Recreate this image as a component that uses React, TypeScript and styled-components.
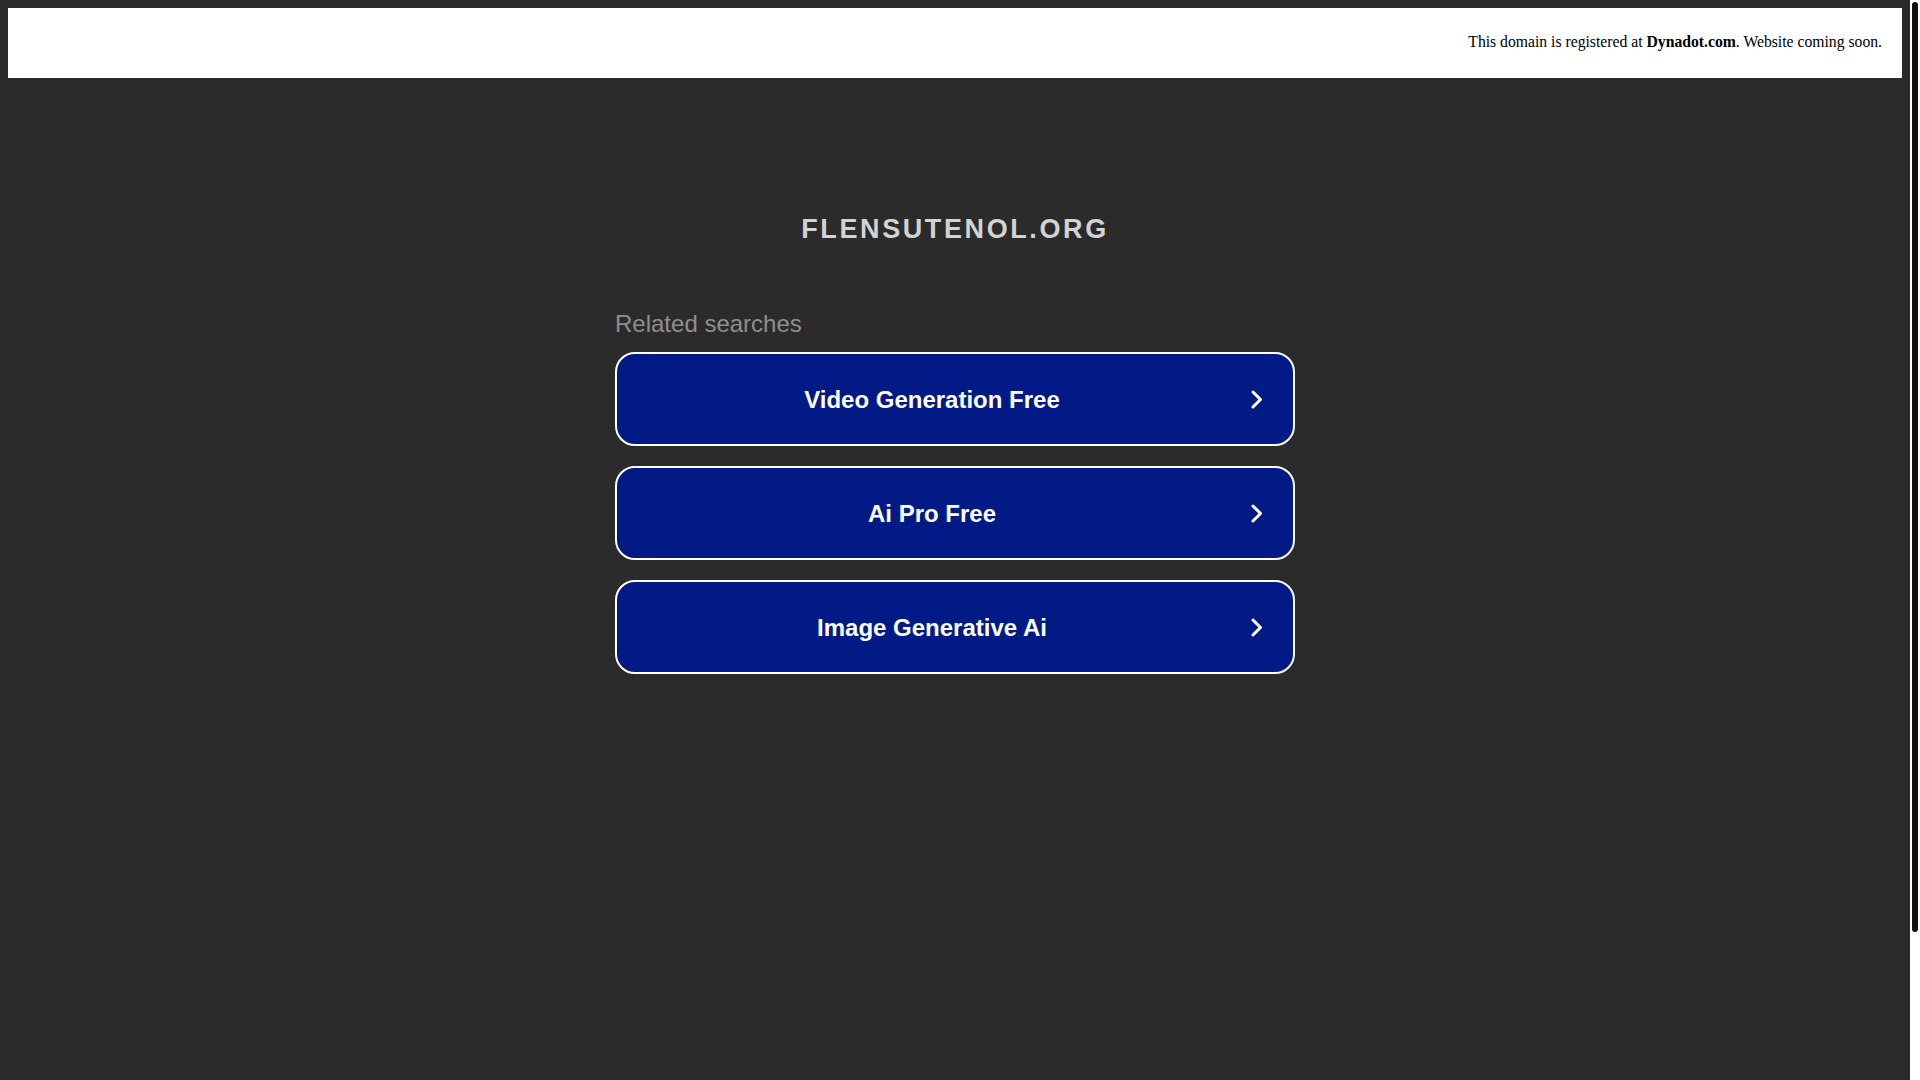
import styled, { createGlobalStyle } from "styled-components";
import { FunctionComponent } from "react";

const GlobalStyle = createGlobalStyle`
  html {
    background: #2b2b2b;
    overflow: hidden;
  }
  body {
    margin: 8px 18px 8px 8px;
    background: #2b2b2b;
    font-family: "Liberation Sans", Arial, sans-serif;
  }
`;

// the browser scrollbar seen in the shot, drawn over the right edge
const ScrollTrack = styled.div`
  position: fixed;
  top: 0;
  right: 0;
  width: 10px;
  height: 100vh;
  background: #ffffff;
`;

const ScrollThumb = styled.div`
  position: absolute;
  top: 2px;
  left: 2px;
  width: 6px;
  height: 930px;
  border-radius: 3px;
  background: #111111;
`;

const Page = styled.div`
  min-height: 1234px;
  display: flex;
  flex-direction: column;
`;

const TopBar = styled.header`
  height: 70px;
  background: #ffffff;
  display: flex;
  align-items: center;
  justify-content: flex-end;
  padding: 0 20px 3px 0;
  box-sizing: border-box;
  font-family: "Liberation Serif", "Times New Roman", serif;
  font-size: 15.7px;
  color: #000000;

  b {
    font-weight: bold;
  }
`;

const Main = styled.main`
  width: 680px;
  margin: 0 auto;
  padding-top: 136px;
  display: flex;
  flex-direction: column;
`;

const DomainName = styled.h1`
  margin: 0;
  text-align: center;
  font-size: 27px;
  font-weight: bold;
  letter-spacing: 2.6px;
  color: #d3d3d3;
  line-height: 30px;
`;

const RelatedTitle = styled.p`
  margin: 66px 0 14px;
  font-size: 24px;
  color: #8f8f8f;
  line-height: 28px;
`;

const List = styled.div`
  display: flex;
  flex-direction: column;
  gap: 20px;
`;

const SearchButton = styled.a`
  display: flex;
  align-items: center;
  height: 94px;
  box-sizing: border-box;
  border: 2px solid #ffffff;
  border-radius: 20px;
  background: #011a85;
  padding: 2px 30px 0 0;
  color: #ffffff;
  text-decoration: none;
  cursor: pointer;

  span {
    flex: 1;
    text-align: center;
    font-size: 24px;
    font-weight: bold;
  }

  svg {
    margin: -2px 0 0 4px;
    flex-shrink: 0;
  }
`;

const Chevron: FunctionComponent = () => (
  <svg width="12" height="19" viewBox="0 0 12 19" fill="none">
    <path d="M2 2 L9.5 9.5 L2 17" stroke="#ffffff" strokeWidth="3" strokeLinecap="round" strokeLinejoin="round" />
  </svg>
);

const searches = ["Video Generation Free", "Ai Pro Free", "Image Generative Ai"];

const App: FunctionComponent = () => {
  return (
    <>
      <GlobalStyle />
      <Page>
        <TopBar>
          <div>
            This domain is registered at <b>Dynadot.com</b>. Website coming soon.
          </div>
        </TopBar>
        <Main>
          <DomainName>FLENSUTENOL.ORG</DomainName>
          <RelatedTitle>Related searches</RelatedTitle>
          <List>
            {searches.map((s) => (
              <SearchButton key={s}>
                <span>{s}</span>
                <Chevron />
              </SearchButton>
            ))}
          </List>
        </Main>
      </Page>
      <ScrollTrack>
        <ScrollThumb />
      </ScrollTrack>
    </>
  );
};

export default App;
